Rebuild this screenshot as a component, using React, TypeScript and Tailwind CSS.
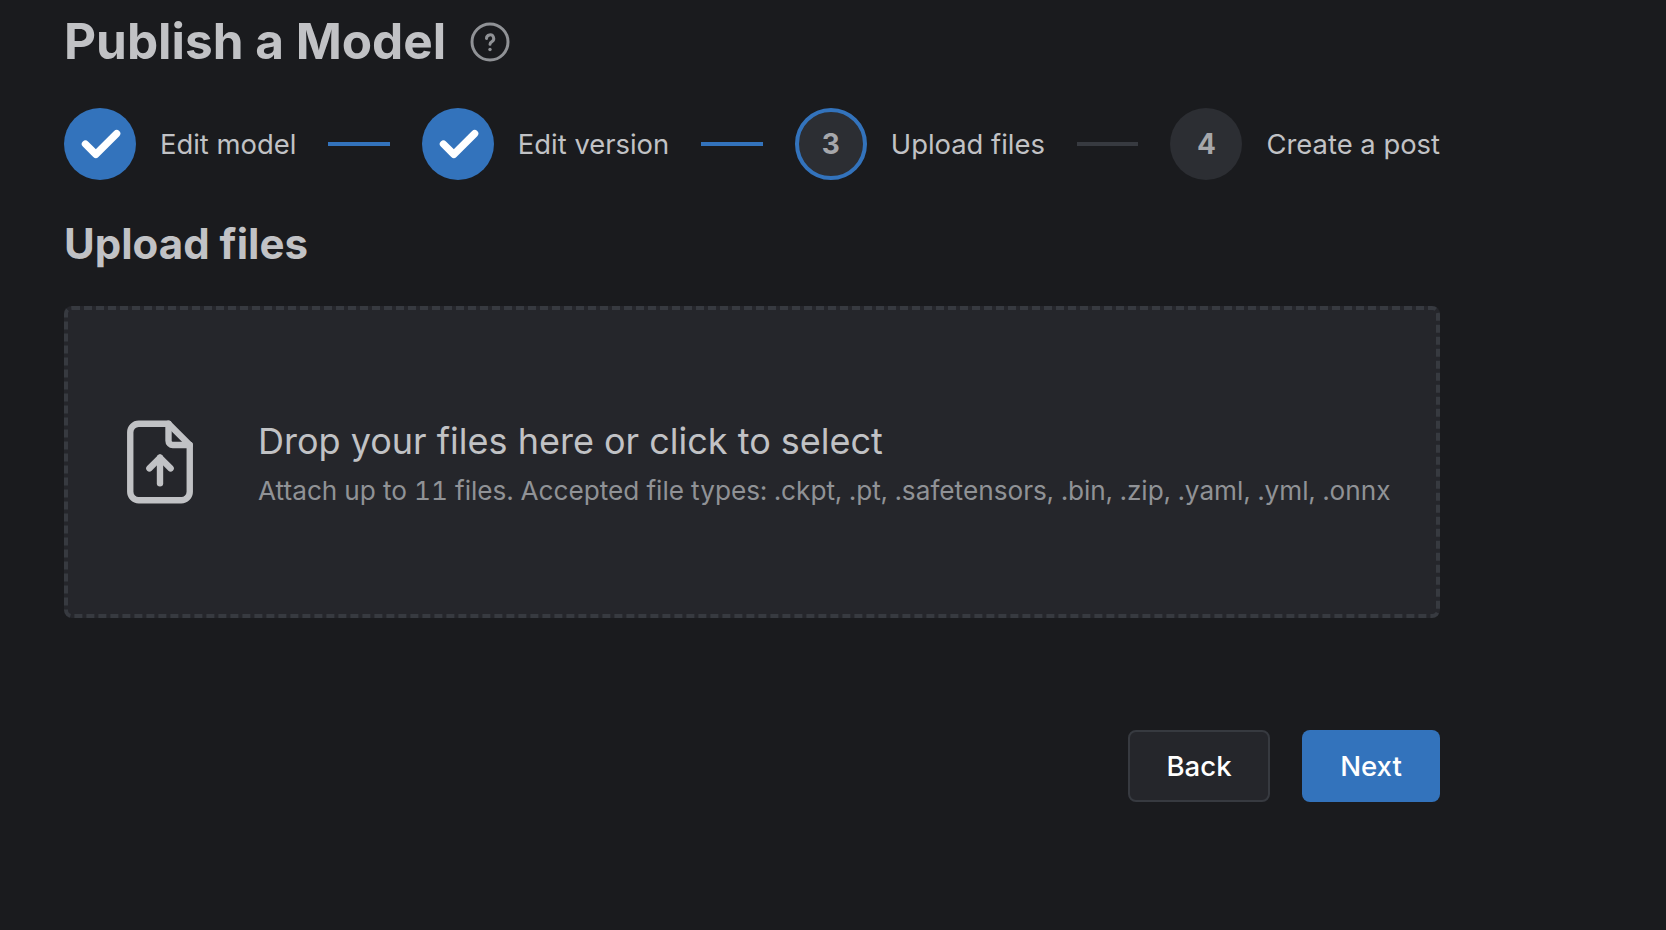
import { Fragment } from 'react'
import { TbCheck, TbFileUpload } from 'react-icons/tb'

const STEPS = [
  { label: 'Edit model', state: 'done' },
  { label: 'Edit version', state: 'done' },
  { label: 'Upload files', state: 'active' },
  { label: 'Create a post', state: 'todo' },
]

function HelpIcon() {
  return (
    <svg width="44" height="44" viewBox="0 0 44 44" fill="none" stroke="#909296" strokeLinecap="round" strokeLinejoin="round" className="shrink-0">
      <circle cx="22" cy="22" r="18" strokeWidth="3" />
      <path d="M18.5 18.5a3.6 3.6 0 1 1 5.4 3.1c-1.2.7-1.9 1.4-1.9 2.6" strokeWidth="3" />
      <path d="M22 29.5v.01" strokeWidth="3.4" />
    </svg>
  )
}

function StepCircle({ state, index }: { state: string; index: number }) {
  if (state === 'done') {
    return (
      <div className="flex h-[72px] w-[72px] shrink-0 items-center justify-center rounded-full bg-[#3373bc] text-white">
        <TbCheck size={50} strokeWidth={3.5} />
      </div>
    )
  }
  return (
    <div
      className={`flex h-[72px] w-[72px] shrink-0 items-center justify-center rounded-full bg-[#2c2e33] text-[28px] font-bold text-[#a6a7ab] ${
        state === 'active' ? 'border-[4px] border-[#3373bc]' : ''
      }`}
    >
      {index + 1}
    </div>
  )
}

export default function App() {
  return (
    <div className="h-[930px] overflow-hidden bg-[#1a1b1e] font-['Inter',sans-serif] text-[#c1c2c5]">
      <div className="w-[1440px] pl-16">
        {/* Title */}
        <div className="flex h-[84px] items-center gap-[22px]">
          <h1 className="text-[49.5px] font-bold leading-none">Publish a Model</h1>
          <HelpIcon />
        </div>

        {/* Stepper */}
        <div className="mt-6 flex items-center">
          {STEPS.map((step, i) => (
            <Fragment key={step.label}>
              <div className="flex items-center">
                <StepCircle state={step.state} index={i} />
                <span className="ml-6 whitespace-nowrap pt-[2px] text-[27.4px] leading-none">{step.label}</span>
              </div>
              {i < 3 && (
                <div className={`mx-8 h-1 flex-1 ${step.state === 'done' ? 'bg-[#3373bc]' : 'bg-[#373a40]'}`} />
              )}
            </Fragment>
          ))}
        </div>

        <h2 className="mt-[38px] text-[42px] font-bold leading-[52px]">Upload files</h2>

        {/* Dropzone */}
        <div className="mt-9 flex h-[312px] items-center gap-[47px] rounded-lg border-4 border-dashed border-[#373a40] bg-[#25262b] pl-[41px]">
          <TbFileUpload size={102} strokeWidth={1.5} className="shrink-0" />
          <div>
            <div className="text-[36px] leading-[56px]">Drop your files here or click to select</div>
            <div className="whitespace-nowrap pt-[1px] text-[26.2px] leading-[42px] text-[#909296] tabular-nums">
              Attach up to 11 files. Accepted file types: .ckpt, .pt, .safetensors, .bin, .zip, .yaml, .yml, .onnx
            </div>
          </div>
        </div>

        {/* Actions */}
        <div className="mt-28 flex justify-end gap-8">
          <button type="button" className="h-[72px] w-[142px] rounded-lg border-2 border-[#373a40] bg-[#25262b] pt-[2px] text-[27.6px] font-medium text-white">
            Back
          </button>
          <button type="button" className="h-[72px] w-[138px] rounded-lg bg-[#3373bc] pt-[2px] text-[27.6px] font-medium text-white">
            Next
          </button>
        </div>
      </div>
    </div>
  )
}
